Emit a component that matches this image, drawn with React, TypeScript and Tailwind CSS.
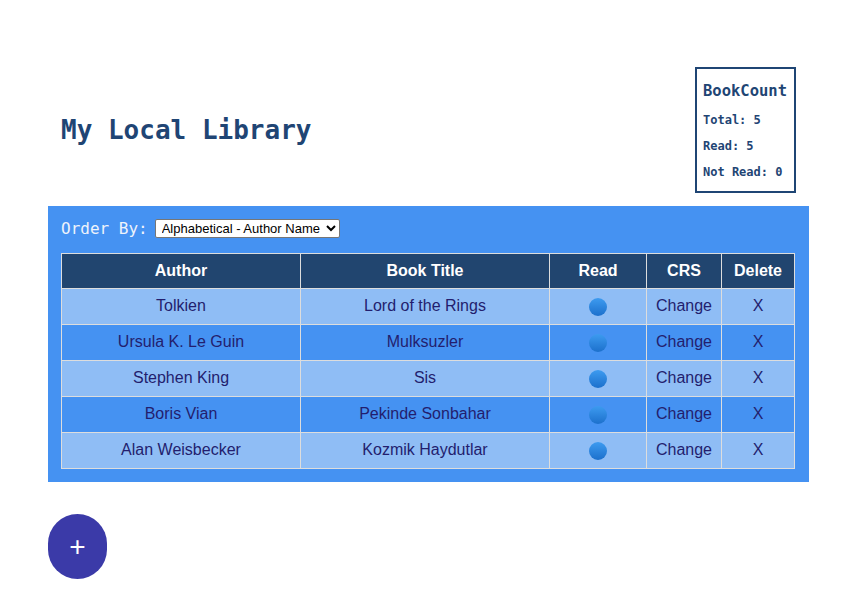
import React from "react";

const books = [
  { author: "Tolkien", title: "Lord of the Rings" },
  { author: "Ursula K. Le Guin", title: "Mulksuzler" },
  { author: "Stephen King", title: "Sis" },
  { author: "Boris Vian", title: "Pekinde Sonbahar" },
  { author: "Alan Weisbecker", title: "Kozmik Haydutlar" },
];

const mono = { fontFamily: '"DejaVu Sans Mono", monospace' };

export default function App() {
  return (
    <div className="min-h-[601px] bg-white" style={{ fontFamily: '"Liberation Sans", Arial, sans-serif' }}>
      <div className="flex items-center justify-between pt-[67px] pl-[61px] pr-[61px]">
        <h1 className="text-[26px] font-bold text-[#1f4574] leading-none" style={mono}>
          My Local Library
        </h1>
        <div className="border-2 border-[#1f4574] w-[101px] h-[126px] pl-[6px] pt-[12px] text-[#1f4574] font-bold" style={mono}>
          <div className="text-[15.5px] leading-[20px]">BookCount</div>
          <div className="text-[12px] leading-[14px] mt-[12px]">Total: 5</div>
          <div className="text-[12px] leading-[14px] mt-[12px]">Read: 5</div>
          <div className="text-[12px] leading-[14px] mt-[12px]">Not Read: 0</div>
        </div>
      </div>
      <div className="mx-[48px] mt-[13px] bg-[#4592f2] px-[13px] pt-[13px] pb-[13px]">
        <div className="flex items-center gap-[7px] h-[19px]">
          <span className="text-[16px] text-[#eef3fb] leading-none" style={mono}>Order By:</span>
          <select className="h-[19px] w-[185px] bg-white text-black text-[13px] border border-[#767676] rounded-[2px] px-[2px]" style={{ fontFamily: '"Liberation Sans", Arial, sans-serif' }}>
            <option>Alphabetical - Author Name</option>
          </select>
        </div>
        <table className="w-[734px] mt-[15px] border-collapse text-[16px]">
          <thead>
            <tr className="bg-[#21456f] text-white font-bold h-[35px]">
              <th className="border border-[#dddddd] w-[239px] pb-[1px]">Author</th>
              <th className="border border-[#dddddd] w-[249px] pb-[1px]">Book Title</th>
              <th className="border border-[#dddddd] w-[97px] pb-[1px]">Read</th>
              <th className="border border-[#dddddd] w-[75px] pb-[1px]">CRS</th>
              <th className="border border-[#dddddd] pb-[1px]">Delete</th>
            </tr>
          </thead>
          <tbody>
            {books.map((b, i) => (
              <tr key={b.author} className={`h-[36px] text-[#231e6e] ${i % 2 === 0 ? "bg-[#8fbdf5]" : "bg-[#4592f2]"}`}>
                <td className="border border-[#dddddd] text-center pb-[1px]">{b.author}</td>
                <td className="border border-[#dddddd] text-center pb-[1px]">{b.title}</td>
                <td className="border border-[#dddddd]">
                  <div className="flex justify-center">
                    <div className="w-[18px] h-[18px] rounded-full bg-gradient-to-b from-[#3d9bf0] to-[#1c70cc]" />
                  </div>
                </td>
                <td className="border border-[#dddddd] text-center pb-[1px]">Change</td>
                <td className="border border-[#dddddd] text-center pb-[1px]">X</td>
              </tr>
            ))}
          </tbody>
        </table>
      </div>
      <div className="ml-[48px] mt-[32px]">
        <button className="w-[59px] h-[65px] rounded-full bg-[#3b3aa8] text-white text-[28px] leading-none flex items-center justify-center">
          +
        </button>
      </div>
    </div>
  );
}
